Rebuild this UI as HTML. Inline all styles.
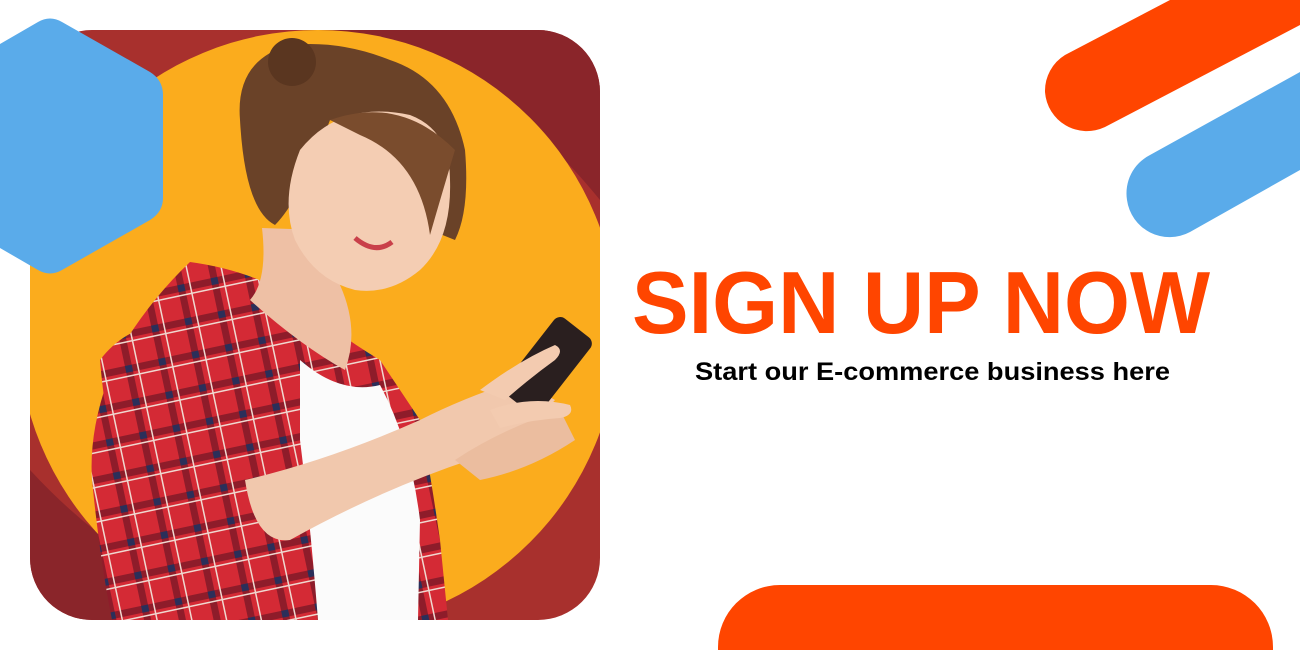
<!DOCTYPE html>
<html><head><style>
html,body{margin:0;padding:0;background:#fff;width:1300px;height:650px;overflow:hidden;}
svg{display:block}
</style></head><body>
<svg width="1300" height="650" viewBox="0 0 1300 650" xmlns="http://www.w3.org/2000/svg">
<defs>
<clipPath id="card"><rect x="30" y="30" width="570" height="590" rx="62"/></clipPath>
<clipPath id="frame"><rect x="0" y="0" width="1300" height="650"/></clipPath>
<pattern id="plaid" width="34" height="34" patternUnits="userSpaceOnUse" patternTransform="rotate(-12)">
<rect width="34" height="34" fill="#d42a35"/>
<rect x="0" y="10" width="34" height="7" fill="#8e1c2a"/>
<rect x="12" y="0" width="7" height="34" fill="#8e1c2a"/>
<rect x="12" y="10" width="7" height="7" fill="#2b2f5a"/>
<rect x="0" y="20" width="34" height="1.5" fill="#f0d8d0"/>
<rect x="24" y="0" width="1.5" height="34" fill="#f0d8d0"/>
</pattern>
</defs>
<g clip-path="url(#card)">
<rect x="30" y="30" width="570" height="590" fill="#a8302d"/>
<path d="M30 30 H600 V200 Q470 40 300 30Z" fill="#8a252a"/>
<path d="M30 470 Q150 600 300 620 H30Z" fill="#8a252a"/>
<circle cx="318" cy="330" r="300" fill="#fbac1d"/>
<path d="M190 262 Q150 300 120 350 Q88 420 92 480 Q100 560 112 620 H448 L440 540 Q430 470 420 420 L380 360 Q330 330 300 300 Q250 270 190 262Z" fill="url(#plaid)"/>
<path d="M300 360 Q340 395 380 385 Q410 440 420 520 L418 620 H318 Q310 520 300 440Z" fill="#fbfbfb"/>
<path d="M100 360 Q130 320 190 320 Q230 380 250 470 L260 530 Q200 560 150 560 Q110 480 100 360Z" fill="url(#plaid)"/>
<path d="M262 228 Q268 280 250 300 Q300 345 345 370 Q360 330 340 285 Q330 250 320 230Z" fill="#eec0a5"/>
<path d="M245 480 Q330 460 420 420 Q470 395 520 380 L555 400 Q520 440 470 460 Q380 490 290 540 Q255 545 245 480Z" fill="#f1c8ad"/>
<path d="M455 460 Q500 430 560 410 L575 440 Q530 470 480 480Z" fill="#ebbd9f"/>
<g transform="rotate(38 548 365)"><rect x="525" y="318" width="46" height="96" rx="8" fill="#2a1f1f"/></g>
<path d="M480 390 Q520 360 555 345 Q565 350 555 360 Q530 378 505 400Z" fill="#f3cbb0"/>
<path d="M490 410 Q530 395 570 405 Q575 415 560 418 Q530 420 500 428Z" fill="#f3cbb0"/>
<path d="M240 120 Q235 60 290 45 Q340 40 390 60 Q450 80 465 150 Q470 210 455 240 L430 230 Q400 130 330 120 Q300 200 275 225 Q245 210 240 120Z" fill="#6a4228"/>
<circle cx="292" cy="62" r="24" fill="#5a3620"/>
<path d="M300 150 Q340 100 410 115 Q450 130 450 180 Q452 240 420 270 Q390 295 355 290 Q315 280 295 240 Q280 200 300 150Z" fill="#f4cdb3"/>
<path d="M330 120 Q400 95 455 150 Q440 200 430 235 Q420 160 360 135Z" fill="#7a4c2d"/>
<path d="M355 238 Q375 255 392 242" stroke="#c9404a" stroke-width="5" fill="none"/>
</g>
<g clip-path="url(#frame)">
<path d="M38 22 Q50 15 62 22 L150 72 Q163 80 163 95 V198 Q163 212 150 220 L62 270 Q50 277 38 270 L0 248 V44Z" fill="#5aabea"/>
<path d="M1045 92 A42 42 0 0 0 1105 127 L1300 25 V0 H1170 L1065 55 A42 42 0 0 0 1045 92Z" fill="#ff4500"/>
<path d="M1127 200 A43 43 0 0 0 1190 232 L1300 170 V72 L1150 155 A43 43 0 0 0 1127 200Z" fill="#5aabea"/>
<path d="M718 650 V647 A62 62 0 0 1 780 585 H1211 A62 62 0 0 1 1273 647 V650Z" fill="#ff4500"/>
</g>
<text x="632" y="333" textLength="578" lengthAdjust="spacingAndGlyphs" font-family="Liberation Sans, sans-serif" font-weight="bold" font-size="88" fill="#ff4500">SIGN UP NOW</text>
<text x="695" y="380" textLength="475" lengthAdjust="spacingAndGlyphs" font-family="Liberation Sans, sans-serif" font-weight="bold" font-size="25" fill="#000">Start our E-commerce business here</text>
</svg>
</body></html>
